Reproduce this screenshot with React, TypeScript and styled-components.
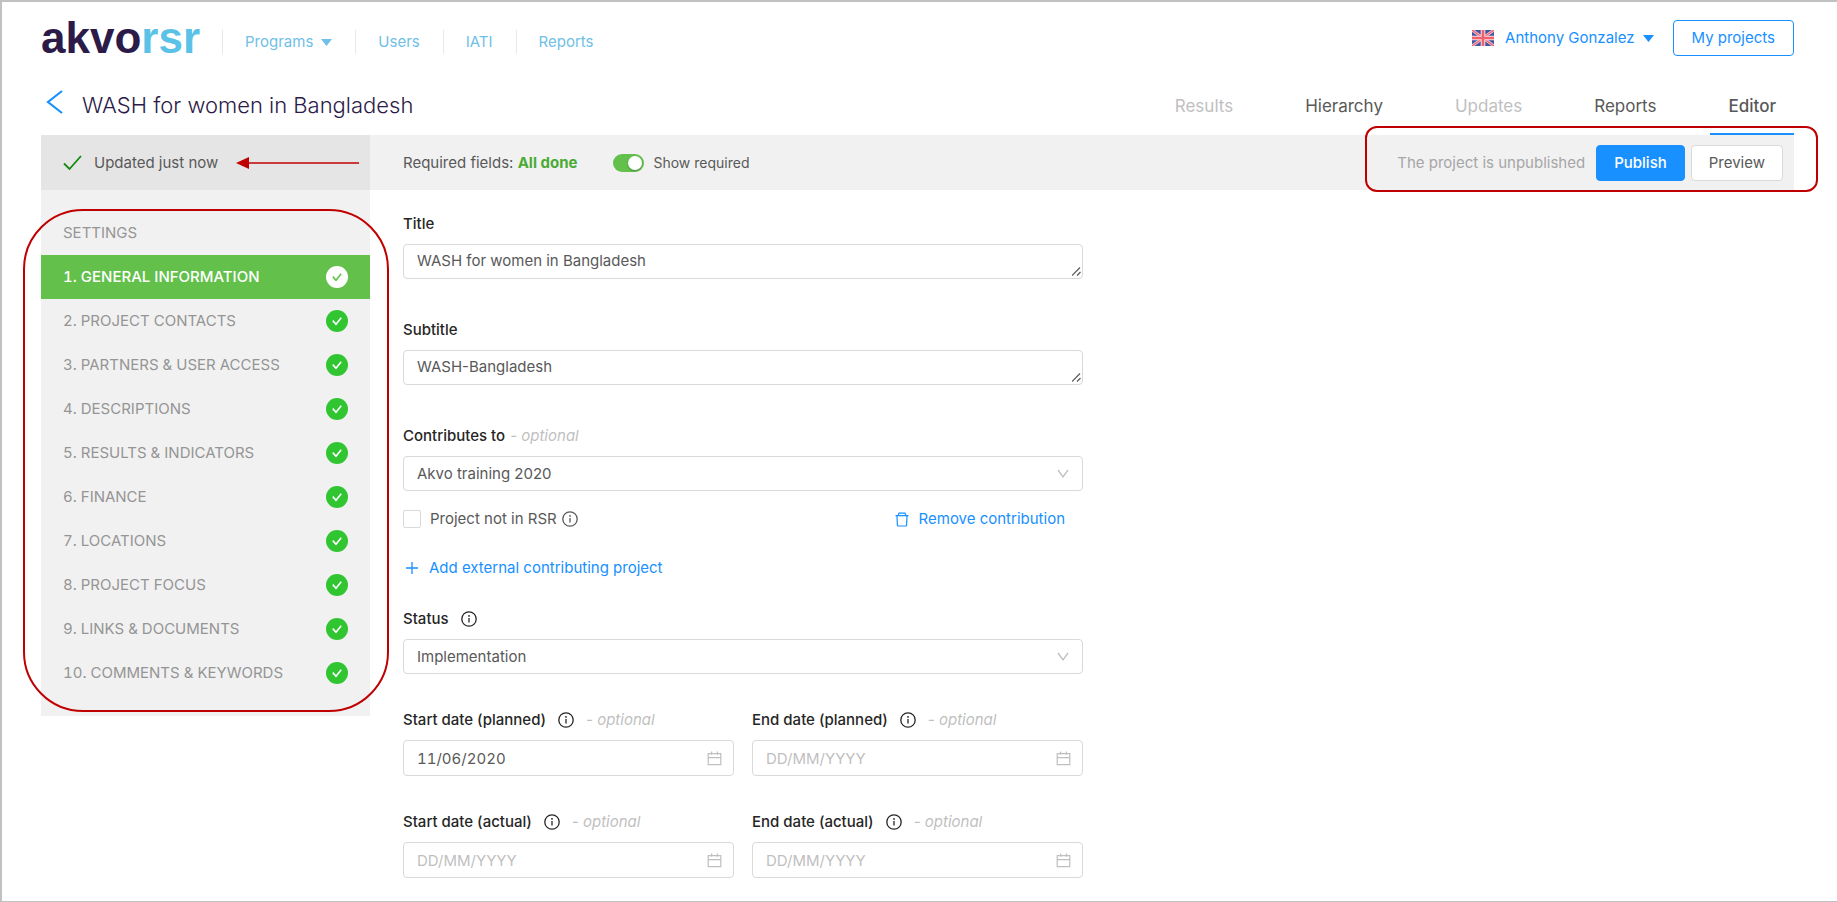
import React from "react";
import styled, { createGlobalStyle, css } from "styled-components";

const BLUE = "#1890ff";
const GREEN = "#62c04b";
const RED = "#c00000";

const GlobalStyle = createGlobalStyle`
  *, *::before, *::after { box-sizing: border-box; }
  body {
    margin: 0;
    background: #fff;
    color: #595959;
    font-family: Inter, "Liberation Sans", sans-serif;
    font-size: 15px;
    line-height: 24px;
  }
  button, input, select, textarea { font: inherit; color: inherit; }
  a { color: inherit; text-decoration: none; }
`;

const Page = styled.div`
  position: relative;
  min-height: 100vh;
  padding: 16px 43px 20px 39px;
  border: 2px solid #bfc2c0;
  border-width: 2px 0 1px 2px;
  overflow-x: hidden;
`;

/* ---------- top header ---------- */

const TopBar = styled.header`
  display: flex;
  align-items: center;
  height: 48px;
`;

const Logo = styled.a`
  display: flex;
  align-self: flex-start;
  color: #2c1a48;
  font-family: "Liberation Sans", sans-serif;
  font-size: 44px;
  line-height: 40px;
  font-weight: 700;
`;

const LogoAccent = styled.span`
  color: #5bc2e7;
`;

const MainNav = styled.nav`
  display: flex;
  margin-left: 22px;
  color: #6fbfe6;
`;

const MainNavLink = styled.a`
  display: flex;
  align-items: center;
  gap: 8px;
  padding: 0 23px 0 22px;
  border-left: 1px solid #e8e8e8;
`;

const Account = styled.div`
  display: flex;
  align-self: flex-start;
  align-items: center;
  gap: 11px;
  margin-left: auto;
  padding-top: 2px;
  color: ${BLUE};
`;

const AccountMenu = styled.button`
  display: flex;
  align-items: center;
  gap: 8px;
  margin-right: 8px;
  padding: 0;
  border: 0;
  background: none;
`;

const Button = styled.button<{ $kind?: "primary" | "outline" }>`
  height: 36px;
  padding: 0 17px;
  border: 1px solid #d9d9d9;
  border-radius: 4px;
  background: #fff;
  ${({ $kind }) => $kind === "primary" && css`
    border-color: ${BLUE};
    background: ${BLUE};
    color: #fff;
    font-weight: 500;
  `}
  ${({ $kind }) => $kind === "outline" && css`
    padding: 0 18px;
    border-color: ${BLUE};
    color: ${BLUE};
  `}
`;

/* ---------- project heading ---------- */

const Heading = styled.div`
  display: flex;
  align-items: stretch;
  height: 69px;
`;

const BackLink = styled.a`
  display: flex;
  align-items: center;
  width: 41px;
  padding: 2px 0 0 5px;
  color: ${BLUE};
`;

const ProjectTitle = styled.h1`
  margin: 0;
  padding-top: 8px;
  align-self: center;
  color: #2c1a48;
  font-size: 22px;
  line-height: 32px;
  font-weight: 300;
`;

const Tabs = styled.nav`
  display: flex;
  gap: 36px;
  margin-left: auto;
`;

const Tab = styled.a<{ $muted?: boolean; $active?: boolean }>`
  display: flex;
  align-items: center;
  padding: 12px 18px 0;
  border-bottom: 2px solid ${({ $active }) => ($active ? BLUE : "transparent")};
  color: ${({ $muted }) => ($muted ? "#bfbfbf" : "#595959")};
  font-size: 17px;
  font-weight: ${({ $active }) => ($active ? 500 : 400)};
`;

/* ---------- status bar ---------- */

const StatusBar = styled.div`
  display: flex;
  align-items: center;
  height: 55px;
  padding-right: 11px;
  background: #f1f1f1;
`;

const SavedState = styled.div`
  display: flex;
  align-items: center;
  gap: 12px;
  width: 329px;
  height: 100%;
  padding: 0 11px 0 22px;
  background: #e5e5e5;
`;

const SavedArrow = styled.svg`
  margin-left: auto;
`;

const RequiredNote = styled.div`
  margin-left: 33px;
  strong { color: #4aab35; font-weight: 700; }
`;

const SwitchLabel = styled.label`
  display: flex;
  align-items: center;
  gap: 9px;
  margin-left: 36px;
  font-size: 14px;
`;

const Switch = styled.input`
  appearance: none;
  display: flex;
  justify-content: flex-end;
  width: 31px;
  height: 18px;
  margin: 0;
  padding: 2px;
  border-radius: 9px;
  background: ${GREEN};
  &::before {
    content: "";
    width: 14px;
    height: 14px;
    border-radius: 50%;
    background: #fff;
    box-shadow: 0 1px 2px rgba(0, 0, 0, 0.25);
  }
`;

const PublishBox = styled.div`
  position: relative;
  display: flex;
  align-items: center;
  gap: 6px;
  margin-left: auto;
`;

const PublishNote = styled.span`
  margin-right: 5px;
  color: #a6a6a6;
`;

/* Hand-drawn callout that lies over the content it points out */
const Callout = styled.div<{ $radius: number; $inset: string }>`
  position: absolute;
  inset: ${({ $inset }) => $inset};
  border: 2px solid ${RED};
  border-radius: ${({ $radius }) => $radius}px;
  pointer-events: none;
`;

/* ---------- body ---------- */

const Body = styled.div`
  display: flex;
  align-items: flex-start;
`;

const Sidebar = styled.nav`
  position: relative;
  width: 329px;
  padding: 21px 0;
  background: #f1f1f1;
  font-variant-numeric: tabular-nums;
`;

const SectionLink = styled.a<{ $active?: boolean }>`
  display: flex;
  align-items: center;
  justify-content: space-between;
  height: 44px;
  padding: 0 22px;
  background: ${({ $active }) => ($active ? GREEN : "transparent")};
  color: ${({ $active }) => ($active ? "#fff" : "#959595")};
  font-weight: ${({ $active }) => ($active ? 500 : 400)};
`;

const Form = styled.form`
  width: 680px;
  margin-left: 33px;
  padding-top: 22px;
`;

const Field = styled.div<{ $space?: number }>`
  display: flex;
  flex-direction: column;
  gap: 8px;
  flex: 1;
  margin-bottom: ${({ $space = 39 }) => $space}px;
`;

const LabelRow = styled.div<{ $gap?: number }>`
  display: flex;
  align-items: center;
  gap: ${({ $gap = 12 }) => $gap}px;
  color: #262626;
  font-weight: 500;
`;

const Optional = styled.em`
  color: #bfbfbf;
  font-weight: 400;
`;

const boxed = css`
  display: block;
  width: 100%;
  height: 35px;
  padding: 4px 13px;
  border: 1px solid #d9d9d9;
  border-radius: 4px;
  background: #fff;
  outline: 0;
`;

const TextArea = styled.textarea`
  ${boxed}
  resize: none;
  overflow: hidden;
`;

const Select = styled.select`
  ${boxed}
  appearance: none;
`;

const DateInput = styled.input`
  ${boxed}
  height: 36px;
  font-variant-numeric: tabular-nums;
  &::placeholder { color: #bfbfbf; opacity: 1; }
`;

const Control = styled.div`
  position: relative;
`;

const Adornment = styled.span<{ $corner?: boolean }>`
  position: absolute;
  display: flex;
  pointer-events: none;
  color: #bfbfbf;
  ${({ $corner }) => $corner
    ? css`right: 2px; bottom: 3px; color: #595959;`
    : css`right: 12px; top: 0; bottom: 0; align-items: center;`}
`;

const ContributionRow = styled.div`
  display: flex;
  align-items: center;
  justify-content: space-between;
  margin: 8px 0 17px;
  padding-right: 18px;
`;

const CheckLabel = styled.label`
  display: flex;
  align-items: center;
  gap: 9px;
`;

const Inline = styled.span`
  display: flex;
  align-items: center;
  gap: 5px;
`;

const Checkbox = styled.input`
  appearance: none;
  width: 18px;
  height: 18px;
  margin: 0;
  border: 1px solid #d9d9d9;
  border-radius: 2px;
`;

const TextButton = styled.button`
  display: flex;
  align-items: center;
  gap: 10px;
  padding: 0;
  border: 0;
  background: none;
  color: ${BLUE};
`;

const AddRow = styled.div`
  display: flex;
  margin-bottom: 27px;
  padding-left: 2px;
`;

const DateRow = styled.div`
  display: flex;
  gap: 18px;
  margin-bottom: 34px;
  &:last-child { margin-bottom: 0; }
`;

/* ---------- drawings ---------- */

const Caret = () => (
  <svg width="11" height="8" viewBox="0 0 11 8" aria-hidden="true">
    <path d="M0 1h11L5.5 8z" fill="currentColor" />
  </svg>
);

const Flag = () => (
  <svg width="22" height="16" viewBox="0 0 22 16" role="img" aria-label="English">
    <rect width="22" height="16" rx="1" fill="#4256a5" />
    <path d="M0 0l22 16M22 0L0 16" stroke="#f3c9d2" strokeWidth="2.8" />
    <path d="M0 0l22 16M22 0L0 16" stroke="#f0616b" strokeWidth="1.3" />
    <path d="M11 0v16M0 8h22" stroke="#f7dde2" strokeWidth="4.6" />
    <path d="M11 0v16M0 8h22" stroke="#f0616b" strokeWidth="2.6" />
  </svg>
);

const BackArrow = () => (
  <svg width="18" height="24" viewBox="0 0 18 24" aria-hidden="true">
    <path d="M16 1L2 12l14 11" fill="none" stroke="currentColor" strokeWidth="2.2" />
  </svg>
);

const Tick = () => (
  <svg width="19" height="16" viewBox="0 0 19 16" aria-hidden="true">
    <path d="M1 8.5l5.5 5.5L18 1" fill="none" stroke="#128a12" strokeWidth="1.8" />
  </svg>
);

const DoneMark = ({ active }: { active?: boolean }) => (
  <svg width="22" height="22" viewBox="0 0 22 22" aria-hidden="true">
    <circle cx="11" cy="11" r="11" fill={active ? "#fff" : "#31c631"} />
    <path d="M6.8 10.6l3.2 3.6 5.2-6.4" fill="none" stroke={active ? GREEN : "#fff"} strokeWidth="1.6" />
  </svg>
);

const Info = () => (
  <svg width="16" height="16" viewBox="0 0 16 16" aria-hidden="true">
    <circle cx="8" cy="8" r="7.2" fill="none" stroke="currentColor" strokeWidth="1.3" />
    <path d="M8 7v4.6" stroke="currentColor" strokeWidth="1.3" />
    <circle cx="8" cy="4.9" r="0.9" fill="currentColor" />
  </svg>
);

const Chevron = () => (
  <svg width="16" height="10" viewBox="0 0 16 10" aria-hidden="true">
    <path d="M3 1l5 7 5-7" fill="none" stroke="currentColor" strokeWidth="1.3" />
  </svg>
);

const Grip = () => (
  <svg width="9" height="9" viewBox="0 0 9 9" aria-hidden="true">
    <path d="M0 8.5L8 .5M5 8.5L8.5 5" stroke="currentColor" strokeWidth="1.2" />
  </svg>
);

const Calendar = () => (
  <svg width="15" height="15" viewBox="0 0 15 15" aria-hidden="true">
    <path d="M1.2 2.7h12.6v11H1.2zM1.2 6.6h12.6M4.6.6v3.2M10.4.6v3.2" fill="none" stroke="currentColor" strokeWidth="1.2" />
  </svg>
);

const Trash = () => (
  <svg width="14" height="15" viewBox="0 0 14 15" aria-hidden="true">
    <path d="M.5 3.7h13M3.2 3.5L4 1.1h6l.8 2.4M2 3.9l.4 9.4q0 .7.7.7h7.8q.7 0 .7-.7L12 3.9" fill="none" stroke="currentColor" strokeWidth="1.2" />
  </svg>
);

const Plus = () => (
  <svg width="14" height="14" viewBox="0 0 14 14" aria-hidden="true">
    <path d="M7 1v12M1 7h12" stroke="currentColor" strokeWidth="1.3" />
  </svg>
);

const sections = [
  "1. GENERAL INFORMATION",
  "2. PROJECT CONTACTS",
  "3. PARTNERS & USER ACCESS",
  "4. DESCRIPTIONS",
  "5. RESULTS & INDICATORS",
  "6. FINANCE",
  "7. LOCATIONS",
  "8. PROJECT FOCUS",
  "9. LINKS & DOCUMENTS",
  "10. COMMENTS & KEYWORDS",
];

const TextField = ({ id, label, value }: { id: string; label: string; value: string }) => (
  <Field>
    <LabelRow><label htmlFor={id}>{label}</label></LabelRow>
    <Control>
      <TextArea id={id} rows={1} defaultValue={value} />
      <Adornment $corner><Grip /></Adornment>
    </Control>
  </Field>
);

const SelectControl = ({ id, value }: { id: string; value: string }) => (
  <Control>
    <Select id={id}><option>{value}</option></Select>
    <Adornment><Chevron /></Adornment>
  </Control>
);

const DateField = ({ id, label, value }: { id: string; label: string; value?: string }) => (
  <Field $space={0}>
    <LabelRow>
      <label htmlFor={id}>{label}</label>
      <Info />
      <Optional>- optional</Optional>
    </LabelRow>
    <Control>
      <DateInput id={id} type="text" placeholder="DD/MM/YYYY" defaultValue={value} />
      <Adornment><Calendar /></Adornment>
    </Control>
  </Field>
);

export default function App() {
  return (
    <Page>
      <GlobalStyle />
      <TopBar>
        <Logo href="#">akvo<LogoAccent>rsr</LogoAccent></Logo>
        <MainNav>
          <MainNavLink href="#">Programs <Caret /></MainNavLink>
          <MainNavLink href="#">Users</MainNavLink>
          <MainNavLink href="#">IATI</MainNavLink>
          <MainNavLink href="#">Reports</MainNavLink>
        </MainNav>
        <Account>
          <Flag />
          <AccountMenu type="button">Anthony Gonzalez <Caret /></AccountMenu>
          <Button type="button" $kind="outline">My projects</Button>
        </Account>
      </TopBar>

      <Heading>
        <BackLink href="#" aria-label="Back"><BackArrow /></BackLink>
        <ProjectTitle>WASH for women in Bangladesh</ProjectTitle>
        <Tabs>
          <Tab href="#" $muted>Results</Tab>
          <Tab href="#">Hierarchy</Tab>
          <Tab href="#" $muted>Updates</Tab>
          <Tab href="#">Reports</Tab>
          <Tab href="#" $active>Editor</Tab>
        </Tabs>
      </Heading>

      <StatusBar>
        <SavedState>
          <Tick />
          Updated just now
          <SavedArrow width="123" height="14" viewBox="0 0 123 14" aria-hidden="true">
            <path d="M12 7h111" stroke={RED} strokeWidth="1.5" />
            <path d="M0 7l13-6v12z" fill={RED} />
          </SavedArrow>
        </SavedState>
        <RequiredNote>Required fields: <strong>All done</strong></RequiredNote>
        <SwitchLabel>
          <Switch type="checkbox" role="switch" defaultChecked />
          Show required
        </SwitchLabel>
        <PublishBox>
          <PublishNote>The project is unpublished</PublishNote>
          <Button type="button" $kind="primary">Publish</Button>
          <Button type="button">Preview</Button>
          <Callout $radius={12} $inset="-19px -35px -11px -32px" />
        </PublishBox>
      </StatusBar>

      <Body>
        <Sidebar>
          <SectionLink href="#">SETTINGS</SectionLink>
          {sections.map((name, i) => (
            <SectionLink key={name} href="#" $active={i === 0}>
              {name}
              <DoneMark active={i === 0} />
            </SectionLink>
          ))}
          <Callout $radius={60} $inset="19px -19px 4px -18px" />
        </Sidebar>

        <Form>
          <TextField id="title" label="Title" value="WASH for women in Bangladesh" />
          <TextField id="subtitle" label="Subtitle" value="WASH-Bangladesh" />
          <Field $space={0}>
            <LabelRow $gap={5}>
              <label htmlFor="contributes">Contributes to</label>
              <Optional>- optional</Optional>
            </LabelRow>
            <SelectControl id="contributes" value="Akvo training 2020" />
            <ContributionRow>
              <CheckLabel>
                <Checkbox type="checkbox" />
                <Inline>Project not in RSR <Info /></Inline>
              </CheckLabel>
              <TextButton type="button"><Trash />Remove contribution</TextButton>
            </ContributionRow>
            <AddRow>
              <TextButton type="button"><Plus />Add external contributing project</TextButton>
            </AddRow>
          </Field>
          <Field $space={34}>
            <LabelRow><label htmlFor="status">Status</label><Info /></LabelRow>
            <SelectControl id="status" value="Implementation" />
          </Field>
          <DateRow>
            <DateField id="start-planned" label="Start date (planned)" value="11/06/2020" />
            <DateField id="end-planned" label="End date (planned)" />
          </DateRow>
          <DateRow>
            <DateField id="start-actual" label="Start date (actual)" />
            <DateField id="end-actual" label="End date (actual)" />
          </DateRow>
        </Form>
      </Body>
    </Page>
  );
}
